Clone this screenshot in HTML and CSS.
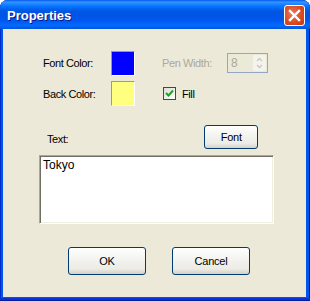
FILE: index.html
```html
<!DOCTYPE html>
<html lang="en">
<head>
    <meta charset="UTF-8">
    <meta name="viewport" content="width=device-width, initial-scale=1.0">
    <title>Properties</title>
    <link rel="stylesheet" href="styles.css">
</head>
<body>
    <div class="window">
        <div class="titlebar">
            <span class="title">Properties</span>
            <div class="close">
                <svg width="13" height="13" viewBox="0 0 13 13">
                    <path d="M2 2 L11 11 M11 2 L2 11" stroke="#fff" stroke-width="2.4" stroke-linecap="square"/>
                </svg>
            </div>
        </div>

        <div class="client">
            <div class="row row-first">
                <span class="label">Font Color:</span>
                <div class="swatch swatch-blue"></div>
                <span class="label label-pen">Pen Width:</span>
                <div class="spin">
                    <span class="spin-value">8</span>
                    <div class="spin-buttons">
                        <svg width="13" height="16" viewBox="0 0 13 16">
                            <path d="M4 6 L6.5 3.5 L9 6" fill="none" stroke="#cac8bb" stroke-width="1.3"/>
                            <path d="M4 10 L6.5 12.5 L9 10" fill="none" stroke="#cac8bb" stroke-width="1.3"/>
                        </svg>
                    </div>
                </div>
            </div>

            <div class="row row-second">
                <span class="label">Back Color:</span>
                <div class="swatch swatch-yellow"></div>
                <div class="checkbox">
                    <svg width="9" height="9" viewBox="0 0 9 9">
                        <path d="M1 4 L3.5 6.5 L8 1.5" fill="none" stroke="#21a121" stroke-width="2"/>
                    </svg>
                </div>
                <span class="fill-label">Fill</span>
            </div>

            <div class="row row-text">
                <span class="label text-label">Text:</span>
                <button class="btn btn-font">Font</button>
            </div>

            <div class="textbox">Tokyo</div>

            <div class="row row-buttons">
                <button class="btn btn-dialog">OK</button>
                <button class="btn btn-dialog">Cancel</button>
            </div>
        </div>
    </div>
</body>
</html>
```

FILE: styles.css
```css
body {
    margin: 0;
    background: #fff;
    font-family: "Liberation Sans", Arial, sans-serif;
    font-size: 11px;
    color: #000;
}

.window {
    width: 310px;
    height: 301px;
    box-sizing: border-box;
    padding: 0 4px 4px 3px;
    display: flex;
    flex-direction: column;
    background: #0055ea;
    border-radius: 8px 8px 0 0;
    box-shadow: inset 0 -1px 0 #001ea0, inset 0 -3px 0 #0831d9, inset 1px 0 0 #0030c8, inset -1px 0 0 #001ea0;
}

.titlebar {
    height: 29px;
    margin: 0 -4px 0 -3px;
    padding: 0 5px 0 7px;
    display: flex;
    align-items: center;
    justify-content: space-between;
    border-radius: 8px 8px 0 0;
    background: linear-gradient(to bottom, #0058ee 0, #3a93ff 2px, #288eff 3px, #127dff 5px, #036ffc 7px, #0262ee 9px, #0057e5 11px, #0054e3 14px, #0055eb 19px, #005bf5 22px, #026afe 25px, #0062ef 27px, #0052d6 29px);
}

.title {
    font-size: 13px;
    font-weight: bold;
    color: #fff;
    text-shadow: 1px 1px 0 #0a1883;
    padding-top: 1px;
}

.close {
    width: 19px;
    height: 19px;
    display: flex;
    align-items: center;
    justify-content: center;
    border: 1px solid #fff;
    border-radius: 3px;
    background: radial-gradient(circle at 40% 40%, #e87a5a 0, #d9481f 60%, #c43a12 100%);
    margin-top: 2px;
}

.client {
    flex: 1;
    background: #ece9d8;
    padding: 22px 0 0 40px;
    letter-spacing: -0.4px;
}

.row {
    display: flex;
    align-items: center;
}

.row-first {
    height: 24px;
}

.label {
    width: 68px;
}

.label-pen {
    width: 65px;
    margin-left: 27px;
    color: #aca899;
}

.swatch {
    width: 23px;
    height: 23px;
    border-top: 1px solid #9d9a8b;
    border-left: 1px solid #9d9a8b;
    border-bottom: 1px solid #fff;
    border-right: 1px solid #fff;
    box-sizing: content-box;
    width: 22px;
}

.swatch-blue {
    background: #0000ff;
}

.swatch-yellow {
    background: #ffff80;
    height: 23px;
}

.spin {
    width: 41px;
    height: 20px;
    box-sizing: border-box;
    border: 1px solid #93a7c5;
    background: #ebe9d8;
    display: flex;
    align-items: center;
    justify-content: space-between;
    padding: 0 1px 0 3px;
}

.spin-value {
    color: #aca899;
    font-size: 12px;
}

.spin-buttons {
    width: 13px;
    height: 16px;
    border-radius: 2px;
    background: #f4f3ee;
    display: flex;
}

.row-second {
    margin-top: 6px;
    height: 25px;
}

.checkbox {
    width: 13px;
    height: 13px;
    box-sizing: border-box;
    margin-left: 28px;
    border: 1px solid #1c5180;
    background: linear-gradient(135deg, #dcdbd5, #fff);
    display: flex;
    align-items: center;
    justify-content: center;
}

.fill-label {
    margin-left: 6px;
}

.row-text {
    margin-top: 19px;
    height: 24px;
}

.text-label {
    margin-left: 4px;
    width: auto;
    padding-top: 4px;
}

.btn {
    font-family: "Liberation Sans", Arial, sans-serif;
    font-size: 11px;
    letter-spacing: -0.2px;
    color: #000;
    border: 1px solid #003c74;
    border-radius: 3px;
    background: linear-gradient(to bottom, #ffffff 0, #f4f4f0 40%, #ecebe6 80%, #d6d0c5 100%);
    padding: 0;
}

.btn-font {
    width: 54px;
    height: 24px;
    margin-left: 136px;
}

.textbox {
    width: 235px;
    height: 69px;
    box-sizing: border-box;
    margin: 6px 0 0 -4px;
    padding: 2px 3px;
    background: #fff;
    border-top: 1px solid #aca899;
    border-left: 1px solid #aca899;
    border-bottom: 1px solid #fff;
    border-right: 1px solid #fff;
    box-shadow: inset 1px 1px 0 #716f64, inset -1px -1px 0 #f1efe2;
    font-size: 12px;
    letter-spacing: 0;
}

.row-buttons {
    margin: 23px 0 0 25px;
    gap: 26px;
}

.btn-dialog {
    width: 78px;
    height: 28px;
}
```
